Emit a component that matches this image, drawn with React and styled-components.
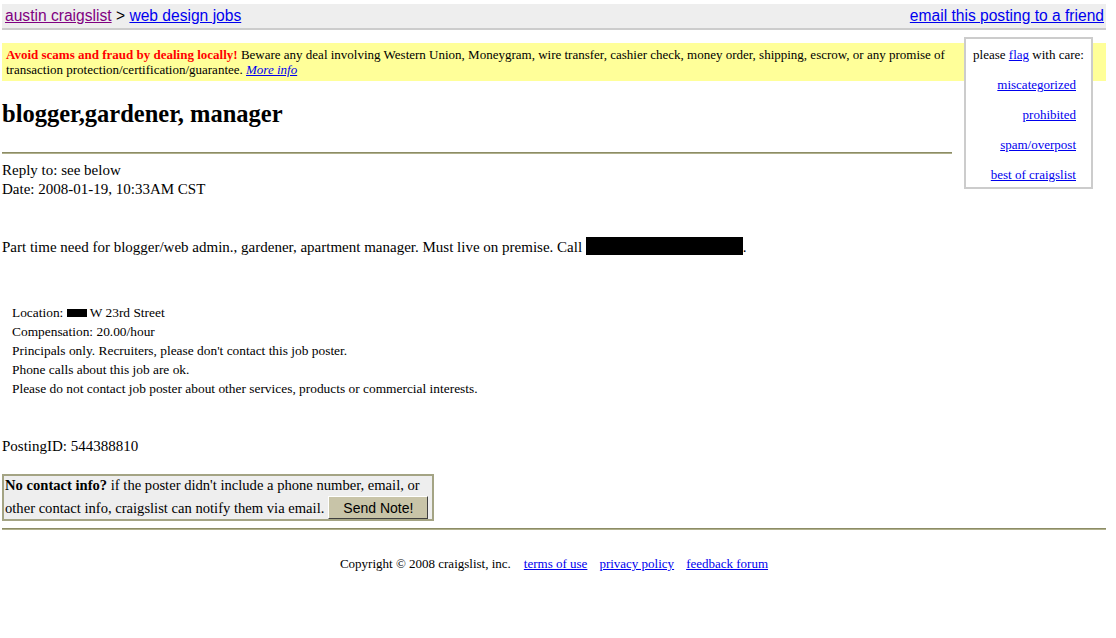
import React from "react";
import styled, { createGlobalStyle } from "styled-components";

const GlobalStyle = createGlobalStyle`
  html, body {
    margin: 0;
    background: #fff;
  }
  body {
    padding: 4px 10px 0 2px;
    font-family: "Liberation Serif", "Times New Roman", serif;
    font-size: 15px;
    color: #000;
  }
  a {
    color: #0000ee;
  }
`;

function App() {
  return (
    <>
      <GlobalStyle />
      <TopBar>
        <div>
          <a href="#" className="visited">austin craigslist</a> &gt;{" "}
          <a href="#">web design jobs</a>
        </div>
        <a href="#">email this posting to a friend</a>
      </TopBar>
      <Content>
        <FlagBox>
          <div className="head">
            please <a href="#">flag</a> with care:
          </div>
          <a href="#">miscategorized</a>
          <a href="#">prohibited</a>
          <a href="#">spam/overpost</a>
          <a href="#">best of craigslist</a>
        </FlagBox>
        <Warning>
          <b>Avoid scams and fraud by dealing locally!</b> Beware any deal
          involving Western Union, Moneygram, wire transfer, cashier check,
          money order, shipping, escrow, or any promise of transaction
          protection/certification/guarantee. <a href="#">More info</a>
        </Warning>
        <Title>blogger,gardener, manager</Title>
        <Rule />
        <Meta>
          Reply to: see below
          <br />
          Date: 2008-01-19, 10:33AM CST
        </Meta>
        <Body>
          Part time need for blogger/web admin., gardener, apartment manager.
          Must live on premise. Call <Redact $w={157} $h={18} $v={-3} />.
        </Body>
        <Details>
          <li>
            Location: <Redact $w={20} $h={8} $v={0} /> W 23rd Street
          </li>
          <li>Compensation: 20.00/hour</li>
          <li>Principals only. Recruiters, please don't contact this job poster.</li>
          <li>Phone calls about this job are ok.</li>
          <li>
            Please do not contact job poster about other services, products or
            commercial interests.
          </li>
        </Details>
        <PostingId>PostingID: 544388810</PostingId>
        <ContactBox>
          <b>No contact info?</b> if the poster didn't include a phone number,
          email, or other contact info, craigslist can notify them via email.
          <SendButton type="button">Send Note!</SendButton>
        </ContactBox>
        <FullRule />
        <Footer>
          <span>Copyright © 2008 craigslist, inc.</span>
          <a href="#">terms of use</a>
          <a href="#">privacy policy</a>
          <a href="#">feedback forum</a>
        </Footer>
      </Content>
    </>
  );
}

const TopBar = styled.div`
  height: 24px;
  background: #eeeeee;
  border-bottom: 2px solid #cccccc;
  display: flex;
  align-items: center;
  justify-content: space-between;
  padding: 0 2px 0 3px;
  font-family: "Liberation Sans", Arial, sans-serif;
  font-size: 15.6px;
  a.visited {
    color: #800080;
  }
`;

const Content = styled.div`
  padding-top: 7px;
`;

const FlagBox = styled.div`
  float: right;
  box-sizing: border-box;
  width: 129px;
  margin: 0 13px 0 12px;
  padding: 8px 0 5px;
  background: #fff;
  border: 2px solid #cccccc;
  font-size: 13px;
  line-height: 15px;
  .head {
    text-align: center;
  }
  & > a {
    display: block;
    text-align: right;
    padding-right: 15px;
    margin-top: 15px;
  }
`;

const Warning = styled.div`
  margin-top: 6px;
  background: #ffff99;
  padding: 4px 4px;
  font-size: 13px;
  line-height: 15px;
  b {
    color: #ff0000;
  }
  a {
    font-style: italic;
  }
`;

const Title = styled.h2`
  margin: 19px 0 0;
  font-size: 24.5px;
  line-height: 27px;
  font-weight: bold;
`;

const Rule = styled.div`
  overflow: hidden;
  height: 0;
  margin-top: 25px;
  border-top: 1px solid #8c8c66;
  border-bottom: 1px solid #b0b08c;
`;

const Meta = styled.div`
  margin-top: 7px;
  line-height: 19px;
`;

const Body = styled.p`
  margin: 38px 0 0;
  line-height: 19px;
`;

const Redact = styled.span`
  display: inline-block;
  width: ${(p) => p.$w}px;
  height: ${(p) => p.$h}px;
  vertical-align: ${(p) => p.$v}px;
  background: #000;
`;

const Details = styled.ul`
  list-style: none;
  margin: 46px 0 0;
  padding: 0 0 0 10px;
  font-size: 13.4px;
  line-height: 19px;
`;

const PostingId = styled.p`
  margin: 39px 0 0;
  line-height: 19px;
`;

const ContactBox = styled.div`
  box-sizing: border-box;
  width: 432px;
  margin-top: 18px;
  padding: 0 0 0 1px;
  background: #eeeeee;
  border: 2px solid #a4a484;
  font-size: 14.6px;
  line-height: 18px;
`;

const SendButton = styled.button`
  box-sizing: border-box;
  width: 100px;
  height: 23px;
  margin: 2px 0 0 4px;
  padding: 0;
  background: #c8c4a8;
  border: 1px solid;
  border-color: #ffffff #404040 #404040 #ffffff;
  font-family: "Liberation Sans", Arial, sans-serif;
  font-size: 14px;
  color: #000;
`;

const FullRule = styled.div`
  height: 0;
  margin-top: 7px;
  border-top: 1px solid #8c8c66;
  border-bottom: 1px solid #b0b08c;
`;

const Footer = styled.div`
  display: flex;
  justify-content: center;
  gap: 12px;
  margin-top: 24px;
  font-size: 13px;
  line-height: 19px;
  span {
    margin-right: 1px;
  }
`;

export default App;
